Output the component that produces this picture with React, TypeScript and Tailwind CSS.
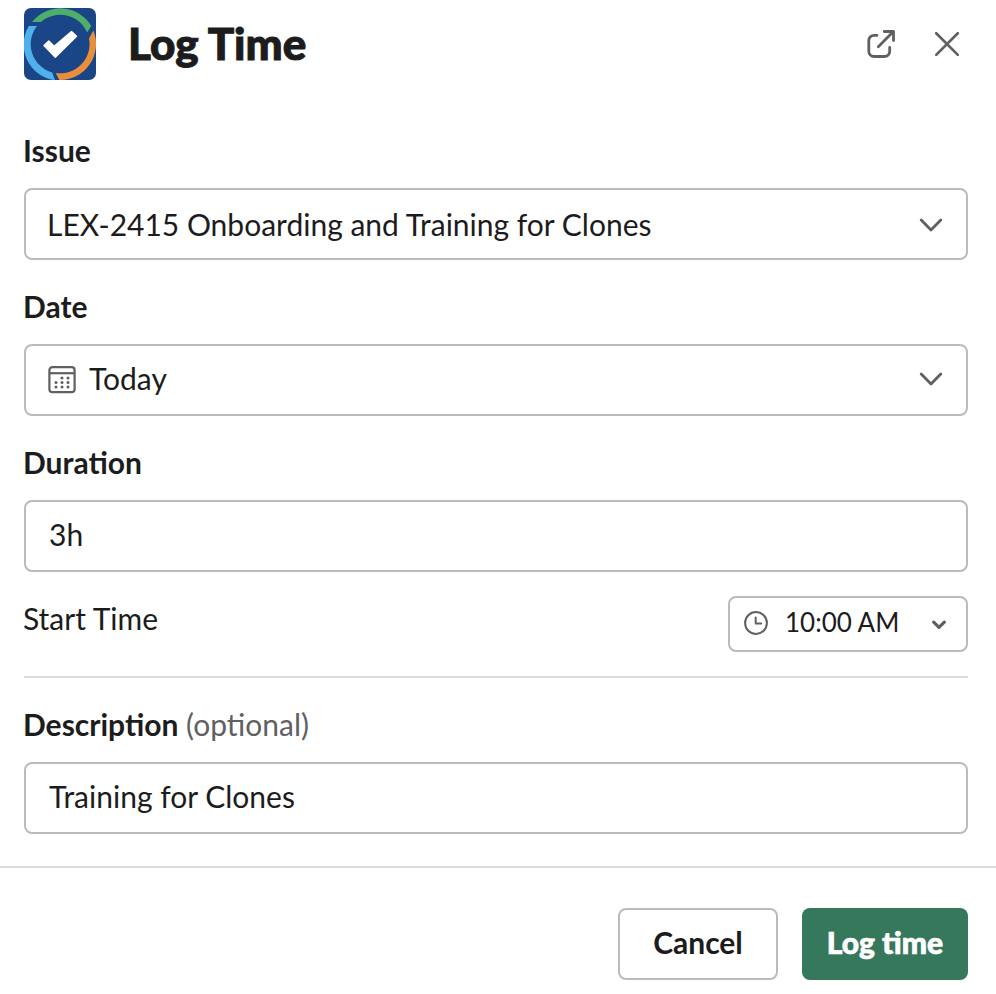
import type { ReactNode } from 'react';

function Logo() {
  return (
    <svg width="72" height="72" viewBox="0 0 72 72" className="block shrink-0 rounded-[7px]">
      <rect width="72" height="72" fill="#1a4587" />
      <path d="M8 14A36 36 0 0 1 67.2 18L63.2 24.6A29.3 29.3 0 0 0 17 14Z" fill="#4eae6c" />
      <path d="M4.8 18A36 36 0 0 0 31 72.2L28.2 64.4A29.3 29.3 0 0 1 13 18Z" fill="#4fb0ec" />
      <path d="M69.4 22.4A36 36 0 0 1 35.4 72L31.7 65A29.3 29.3 0 0 0 65 30.4Z" fill="#e88f3b" />
      <path
        d="M20 37.5 24.8 33 30.2 38.2 47.5 23.6 52.6 28.2 31.3 49.2Z"
        fill="#fff"
        stroke="#fff"
        strokeWidth="1.4"
        strokeLinejoin="round"
      />
    </svg>
  );
}

function OpenIcon() {
  return (
    <svg width="32" height="32" viewBox="0 0 32 32" fill="none" stroke="#616061" strokeWidth="2.8" strokeLinecap="round" strokeLinejoin="round">
      <path d="M11 6.3H8a5.2 5.2 0 0 0-5.2 5.2v10.8A5.2 5.2 0 0 0 8 27.5h10.5a5.2 5.2 0 0 0 5.2-5.2v-3.8" />
      <path d="M12.3 17.7 27.4 2.5M18.2 2.5h9.3v9" />
    </svg>
  );
}

function CloseIcon() {
  return (
    <svg width="32" height="32" viewBox="0 0 32 32" fill="none" stroke="#616061" strokeWidth="2.7" strokeLinecap="round">
      <path d="M5.2 4.3 26.8 25.9M26.8 4.3 5.2 25.9" />
    </svg>
  );
}

function CalendarIcon() {
  const dots = [[14, 12], [20, 12], [8, 16.5], [14, 16.5], [20, 16.5], [8, 21], [14, 21], [20, 21]];
  return (
    <svg width="28" height="28" viewBox="0 0 28 28" fill="none" className="mt-[2px] shrink-0">
      <rect x="1.4" y="1.2" width="25.2" height="25" rx="3" stroke="#616061" strokeWidth="2.2" />
      <path d="M1.5 7.2h25" stroke="#616061" strokeWidth="2.2" />
      {dots.map(([x, y]) => (
        <circle key={`${x}-${y}`} cx={x} cy={y} r="1.5" fill="#616061" />
      ))}
    </svg>
  );
}

function ClockIcon() {
  return (
    <svg width="24" height="24" viewBox="0 0 24 24" fill="none" stroke="#616061" strokeWidth="2" className="shrink-0">
      <circle cx="12" cy="12" r="10.9" />
      <path d="M11.7 6.6V12.6H17.2" strokeLinecap="round" strokeLinejoin="round" />
    </svg>
  );
}

function Chevron() {
  return (
    <svg width="24" height="24" viewBox="0 0 24 24" fill="none" className="ml-auto shrink-0">
      <path d="M2.2 7.1 12 17 21.8 7.1" stroke="#616061" strokeWidth="2.8" strokeLinecap="round" strokeLinejoin="round" />
    </svg>
  );
}

function Field({ label, children }: { label: ReactNode; children: ReactNode }) {
  return (
    <div>
      <div className="-ml-px flex h-[52px] items-start text-[30px] leading-[29px]">{label}</div>
      <div className="flex h-[72px] items-center rounded-lg border-2 border-[#bbb] text-[30px]">{children}</div>
    </div>
  );
}

export default function App() {
  return (
    <div className="flex h-[994px] flex-col bg-white font-[Lato,sans-serif] text-[#1d1c1d]">
      <header className="flex h-20 items-center pt-2 pr-[33px] pl-6">
        <Logo />
        <h1 className="ml-8 flex-1 pb-px text-[44px] leading-[71px] font-black [-webkit-text-stroke:1px_#1d1c1d]">
          Log Time
        </h1>
        <button aria-label="Open in new window" className="mt-[2px] mr-[33px]">
          <OpenIcon />
        </button>
        <button aria-label="Close" className="mt-[2px]">
          <CloseIcon />
        </button>
      </header>

      <main className="px-6 pt-14 pr-7">
        <div className="flex flex-col gap-8">
          <Field label={<b>Issue</b>}>
            <div className="flex w-full items-center pt-px pr-[23px] pl-[21px]">
              <span>LEX-2415 Onboarding and Training for Clones</span>
              <Chevron />
            </div>
          </Field>
          <Field label={<b>Date</b>}>
            <div className="flex w-full items-center pr-[23px] pb-[2px] pl-[22px]">
              <CalendarIcon />
              <span className="mb-[2px] ml-[13px]">Today</span>
              <Chevron />
            </div>
          </Field>
          <Field label={<b>Duration</b>}>
            <div className="pb-1 pl-[23px]">3h</div>
          </Field>
        </div>

        <div className="mt-6 flex h-[82px] items-start justify-between border-b-2 border-[#ddd]">
          <div className="-ml-px text-[30px] leading-[44px]">Start Time</div>
          <div className="flex h-14 w-60 items-center rounded-lg border-2 border-[#bbb] pr-5 pb-[2px] pl-[14px] text-[26px]">
            <ClockIcon />
            <span className="mb-[2px] ml-[17px]">10:00 AM</span>
            <svg width="14" height="10" viewBox="0 0 14 10" fill="none" className="mt-[3px] ml-auto">
              <path d="M1.7 2.2 7 7.3 12.3 2.2" stroke="#616061" strokeWidth="3.2" strokeLinecap="round" strokeLinejoin="round" />
            </svg>
          </div>
        </div>

        <div className="mt-8">
          <Field
            label={
              <span>
                <b>Description</b> <span className="text-[#616061]">(optional)</span>
              </span>
            }
          >
            <div className="pb-1 pl-[23px]">Training for Clones</div>
          </Field>
        </div>
      </main>

      <footer className="mt-8 flex flex-1 items-start justify-end gap-6 border-t-2 border-[#ddd] pt-10 pr-7">
        <button className="h-[72px] w-40 rounded-lg border-2 border-[#bbb] pb-1 text-[30px] font-bold">Cancel</button>
        <button className="h-[72px] w-[166px] rounded-lg bg-[#35785b] pb-1 text-[30px] font-black text-white [-webkit-text-stroke:0.7px_#fff]">
          Log time
        </button>
      </footer>
    </div>
  );
}
